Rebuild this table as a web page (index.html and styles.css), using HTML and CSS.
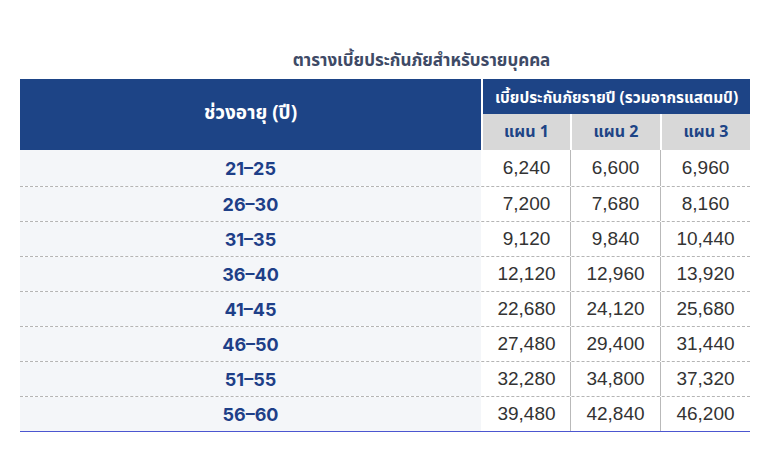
FILE: index.html
```html
<!DOCTYPE html>
<html lang="th">
<head>
<meta charset="utf-8">
<link rel="stylesheet" href="styles.css">
</head>
<body>
<div class="page">
  <h1 class="title">ตารางเบี้ยประกันภัยสำหรับรายบุคคล</h1>
  <div class="table">
    <div class="head">
      <div class="h-age">ช่วงอายุ (ปี)</div>
      <div class="h-gap"></div>
      <div class="h-right">
        <div class="h-top">เบี้ยประกันภัยรายปี (รวมอากรแสตมป์)</div>
        <div class="h-plans">
          <div class="plan">แผน 1</div>
          <div class="pgap"></div>
          <div class="plan">แผน 2</div>
          <div class="pgap"></div>
          <div class="plan">แผน 3</div>
        </div>
      </div>
    </div>
    <div class="row first"><div class="age">21–25</div><div class="gap"></div><div class="val b">6,240</div><div class="val b">6,600</div><div class="val">6,960</div></div>
    <div class="row"><div class="age">26–30</div><div class="gap"></div><div class="val b">7,200</div><div class="val b">7,680</div><div class="val">8,160</div></div>
    <div class="row"><div class="age">31–35</div><div class="gap"></div><div class="val b">9,120</div><div class="val b">9,840</div><div class="val">10,440</div></div>
    <div class="row"><div class="age">36–40</div><div class="gap"></div><div class="val b">12,120</div><div class="val b">12,960</div><div class="val">13,920</div></div>
    <div class="row"><div class="age">41–45</div><div class="gap"></div><div class="val b">22,680</div><div class="val b">24,120</div><div class="val">25,680</div></div>
    <div class="row"><div class="age">46–50</div><div class="gap"></div><div class="val b">27,480</div><div class="val b">29,400</div><div class="val">31,440</div></div>
    <div class="row"><div class="age">51–55</div><div class="gap"></div><div class="val b">32,280</div><div class="val b">34,800</div><div class="val">37,320</div></div>
    <div class="row last"><div class="age">56–60</div><div class="gap"></div><div class="val b">39,480</div><div class="val b">42,840</div><div class="val">46,200</div></div>
  </div>
</div>
</body>
</html>
```
FILE: styles.css
```css
* { box-sizing: border-box; }
html, body { margin: 0; padding: 0; background: #ffffff; }
body { font-family: "Noto Sans", "Noto Sans Thai", "DejaVu Sans", sans-serif; }
.page { padding: 48px 18px 0 20px; width: 768px; }
.title {
  margin: 0 0 7px 0;
  padding-left: 73px;
  text-align: center;
  font-size: 17px;
  line-height: 24px;
  font-weight: 700;
  color: #3e4a66;
  width: 730px;
}
.table { width: 730px; }
.head {
  display: grid;
  grid-template-columns: 461px 2px 267px;
  height: 71px;
}
.h-age {
  background: #1d4486;
  color: #fff;
  font-weight: 700;
  font-size: 19px;
  display: flex;
  align-items: center;
  justify-content: center;
  padding-bottom: 2px;
}
.h-right { display: flex; flex-direction: column; }
.h-top {
  background: #1d4486;
  color: #fff;
  height: 35px;
  font-weight: 700;
  font-size: 15.4px;
  display: flex;
  align-items: center;
  justify-content: center;
  padding-top: 3px;
}
.h-plans {
  display: grid;
  grid-template-columns: 87px 2px 88px 2px 88px;
  height: 36px;
}
.plan {
  background: #d8d8d8;
  color: #1d4486;
  font-weight: 700;
  font-size: 16px;
  display: flex;
  align-items: center;
  justify-content: center;
}
.row {
  display: grid;
  grid-template-columns: 461px 2px 88px 90px 89px;
  height: 35px;
  border-bottom: 1px dashed #b5b5b5;
}
.row.first { height: 37px; }
.row.last { height: 35px; border-bottom: 1px solid #4c56d0; }
.age {
  background: #f4f6f9;
  color: #1e3f88;
  font-family: "Inter", "Liberation Sans", sans-serif;
  font-weight: 700;
  font-size: 18px;
  display: flex;
  align-items: center;
  justify-content: center;
}
.val {
  color: #333;
  font-family: "Liberation Sans", Arial, sans-serif;
  font-size: 19px;
  display: flex;
  align-items: center;
  justify-content: center;
}
.val.b { border-right: 1px solid #b9b9b9; }
```
